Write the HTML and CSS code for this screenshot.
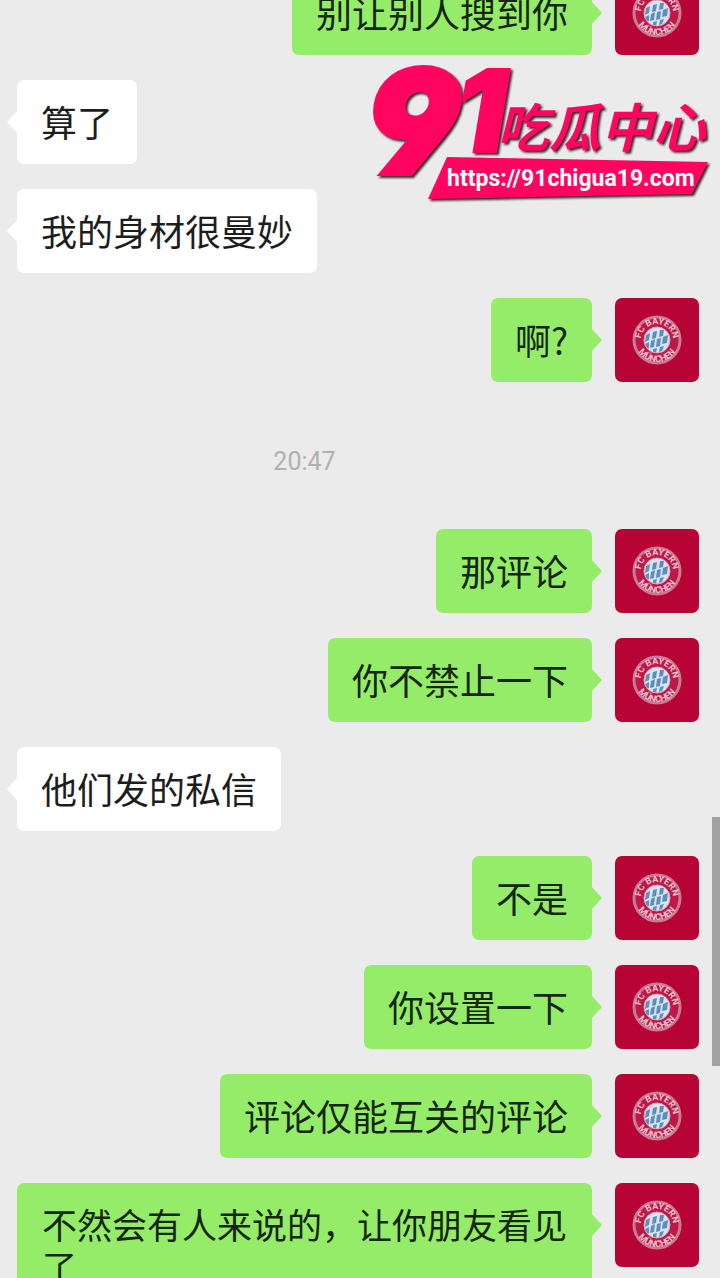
FILE: index.html
```
<!DOCTYPE html>
<html lang="zh-CN">
<head>
<meta charset="utf-8">
<meta name="viewport" content="width=device-width, initial-scale=1">
<title>聊天</title>
<link rel="stylesheet" href="styles.css">
</head>
<body>
<svg class="defs" aria-hidden="true">
  <defs>
    <path id="arc-top" d="M26 42a16 16 0 0 1 32 0"/>
    <path id="arc-bottom" d="M20 42a22 22 0 0 0 44 0"/>
    <symbol id="crest" viewBox="0 0 84 84">
      <rect width="84" height="84" fill="#b80435"/>
      <circle cx="42" cy="42" r="23" fill="#bd1846" stroke="#c97a95" stroke-width="3"/>
      <circle cx="42" cy="42" r="13" fill="#dbe2ef"/>
      <path d="M31 37l4-2-1 7-4 2zM38 34l4-1-1 7-4 1zM45 32l4 0-1 6-4 1zM30 46l4-2 0 6-2 1zM36 43l4-2-1 8-4 1zM42 41l4-1-1 8-4 1zM48 39l5-2-1 8-5 1zM38 51l4-1-1 5-3-1zM45 49l4-1-2 5-3 1z" fill="#5b8fba"/>
      <circle cx="42" cy="42" r="13" fill="none" stroke="#dba3b8"/>
      <g class="crest-text">
        <text><textPath href="#arc-top" startOffset="50%">FC BAYERN</textPath></text>
        <text><textPath href="#arc-bottom" startOffset="50%">MÜNCHEN</textPath></text>
      </g>
    </symbol>
  </defs>
</svg>
<main class="chat">
  <section class="thread">
    <div class="message sent"><p class="bubble">别让别人搜到你</p><svg class="avatar" role="img" aria-label="头像"><use href="#crest"/></svg></div>
    <div class="message"><p class="bubble">算了</p></div>
    <div class="message"><p class="bubble">我的身材很曼妙</p></div>
    <div class="message sent"><p class="bubble">啊?</p><svg class="avatar" role="img" aria-label="头像"><use href="#crest"/></svg></div>
  </section>
  <time class="stamp">20:47</time>
  <section class="thread">
    <div class="message sent"><p class="bubble">那评论</p><svg class="avatar" role="img" aria-label="头像"><use href="#crest"/></svg></div>
    <div class="message sent"><p class="bubble">你不禁止一下</p><svg class="avatar" role="img" aria-label="头像"><use href="#crest"/></svg></div>
    <div class="message"><p class="bubble">他们发的私信</p></div>
    <div class="message sent"><p class="bubble">不是</p><svg class="avatar" role="img" aria-label="头像"><use href="#crest"/></svg></div>
    <div class="message sent"><p class="bubble">你设置一下</p><svg class="avatar" role="img" aria-label="头像"><use href="#crest"/></svg></div>
    <div class="message sent"><p class="bubble">评论仅能互关的评论</p><svg class="avatar" role="img" aria-label="头像"><use href="#crest"/></svg></div>
    <div class="message sent"><p class="bubble long">不然会有人来说的，让你朋友看见了</p><svg class="avatar" role="img" aria-label="头像"><use href="#crest"/></svg></div>
  </section>
</main>
<div class="scroll-thumb"></div>
<a class="brand" href="https://91chigua19.com">
  <svg class="brand-art" viewBox="0 0 350 145">
    <g class="brand-ink">
      <text class="nine" x="1" y="112">9</text>
      <text class="one" x="89" y="91">1</text>
      <text class="name" x="131" y="86">吃瓜中心</text>
      <path d="M81 96 342 101 326 133 62 138Z"/>
    </g>
    <text class="url" x="81" y="125">https://91chigua19.com</text>
  </svg>
</a>
</body>
</html>
```
FILE: styles.css
```
* { box-sizing: border-box; }

body {
  margin: 0;
  height: 100vh;
  position: relative;
  overflow: hidden;
  background: #ebebeb;
  color: #1d1d1d;
  font-family: Roboto, "Noto Sans CJK SC", sans-serif;
}

.defs {
  position: absolute;
  width: 0;
  height: 0;
}

.chat {
  display: flex;
  flex-direction: column;
  margin-top: -29px;
  padding: 0 21px 0 17px;
}

.thread {
  display: flex;
  flex-direction: column;
  gap: 25px;
}

.message {
  display: flex;
  align-items: flex-start;
  gap: 23px;
}

.sent { justify-content: flex-end; }

.bubble {
  position: relative;
  margin: 0;
  padding: 20px 24px 22px;
  border-radius: 7px;
  background: #fff;
  font-family: "Noto Sans CJK SC", sans-serif;
  font-size: 36px;
  line-height: 42px;
}

.sent .bubble {
  background: #95ec69;
  color: #16260f;
}

.sent .long {
  padding: 20px 25px 22px;
  font-size: 35px;
}

.bubble::before {
  content: "";
  position: absolute;
  top: 30px;
  left: -10px;
  width: 11px;
  height: 24px;
  background: inherit;
  clip-path: polygon(0 50%, 100% 0, 100% 100%);
}

.sent .bubble::before {
  left: auto;
  right: -10px;
  clip-path: polygon(100% 50%, 0 0, 0 100%);
}

.avatar {
  flex: none;
  width: 84px;
  height: 84px;
  border-radius: 7px;
}

.crest-text {
  fill: #efc3cf;
  font-family: Roboto, sans-serif;
  font-size: 9px;
  font-weight: 700;
  text-anchor: middle;
}

.stamp {
  padding: 72px 107px 59px 0;
  color: #b0b0b0;
  font-size: 25px;
  line-height: 16px;
  text-align: center;
}

.scroll-thumb {
  position: absolute;
  top: 817px;
  right: 0;
  width: 8px;
  height: 249px;
  background: #a2a2a2;
}

.brand {
  position: absolute;
  top: 61px;
  right: 4px;
  width: 350px;
  height: 145px;
}

.brand-art {
  display: block;
  width: 100%;
  height: 100%;
  overflow: visible;
}

.brand-ink {
  fill: #ff0560;
  filter: drop-shadow(2px 2px 1px #3a2630);
}

.nine,
.one {
  font-family: Inter, sans-serif;
  font-feature-settings: "cv04", "cv09";
  font-style: italic;
  font-weight: 900;
  stroke: #ff0560;
}

.nine {
  font-size: 142px;
  stroke-width: 6px;
}

.one {
  font-size: 114px;
  stroke-width: 2px;
}

.name {
  font-family: "Noto Sans CJK SC", sans-serif;
  font-size: 52px;
  font-style: italic;
  font-weight: 700;
}

.url {
  fill: #fff;
  font-family: Roboto, sans-serif;
  font-size: 23px;
  font-weight: 700;
}
```
